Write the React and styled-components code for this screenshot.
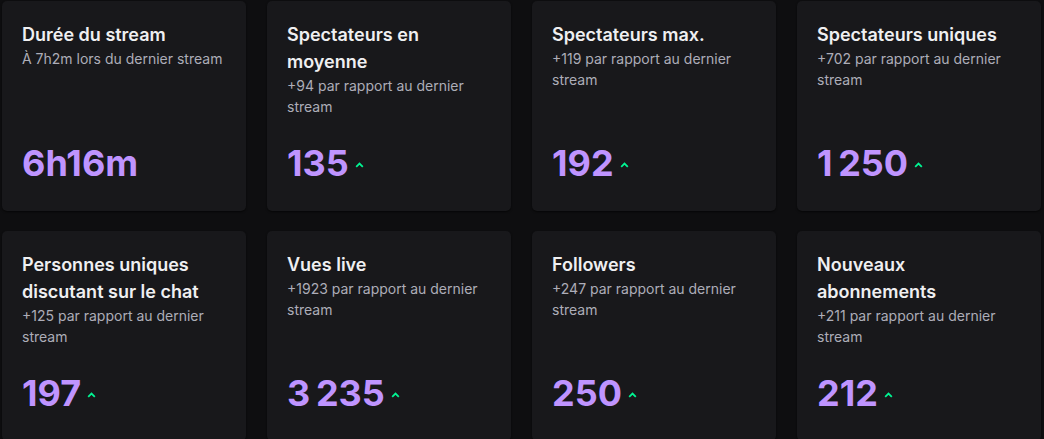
import React from 'react';
import styled, { createGlobalStyle } from 'styled-components';

const GlobalStyle = createGlobalStyle`
  html, body {
    margin: 0;
    padding: 0;
    background: #0e0e10;
  }
  body {
    font-family: Inter, "Noto Sans", "Liberation Sans", sans-serif;
    -webkit-font-smoothing: antialiased;
  }
`;

const stats = [
  { title: 'Durée du stream', desc: 'À 7h2m lors du dernier stream', value: '6h16m', up: false },
  { title: 'Spectateurs en moyenne', desc: '+94 par rapport au dernier stream', value: '135', up: true },
  { title: 'Spectateurs max.', desc: '+119 par rapport au dernier stream', value: '192', up: true },
  { title: 'Spectateurs uniques', desc: '+702 par rapport au dernier stream', value: '1\u202F250', up: true },
  { title: 'Personnes uniques discutant sur le chat', desc: '+125 par rapport au dernier stream', value: '197', up: true },
  { title: 'Vues live', desc: '+1923 par rapport au dernier stream', value: '3\u202F235', up: true },
  { title: 'Followers', desc: '+247 par rapport au dernier stream', value: '250', up: true },
  { title: 'Nouveaux abonnements', desc: '+211 par rapport au dernier stream', value: '212', up: true },
];

const Grid = styled.div`
  display: grid;
  grid-template-columns: repeat(4, 244px);
  grid-auto-rows: 210px;
  column-gap: 21px;
  row-gap: 20px;
  padding: 1px 0 0 2px;
`;

const Card = styled.div`
  background: #18181b;
  border-radius: 5px;
  box-shadow: 0 1px 2px rgba(0, 0, 0, 0.6);
  padding: 20px 20px 25px;
  display: flex;
  flex-direction: column;
  box-sizing: border-box;
`;

const Title = styled.div`
  color: #efeff1;
  font-size: 18px;
  font-weight: 600;
  line-height: 27px;
`;

const Desc = styled.div`
  color: #adadb8;
  font-size: 14px;
  line-height: 21px;
`;

const ValueRow = styled.div`
  margin-top: auto;
  display: flex;
  align-items: center;
  gap: 6px;
`;

const Value = styled.span`
  color: #bf94ff;
  font-size: 36px;
  font-weight: 700;
  line-height: 46px;
`;

const Trend = styled.svg`
  width: 9px;
  height: 6px;
  margin-top: 4px;
`;

const UpArrow = () => (
  <Trend viewBox="0 0 9 6">
    <polyline points="1.2,4.8 4.5,1.6 7.8,4.8" fill="none" stroke="#00f593" strokeWidth="1.8" />
  </Trend>
);

export default function App() {
  return (
    <>
      <GlobalStyle />
      <Grid>
        {stats.map((s, i) => (
          <Card key={i}>
            <Title>{s.title}</Title>
            <Desc>{s.desc}</Desc>
            <ValueRow>
              <Value>{s.value}</Value>
              {s.up && <UpArrow />}
            </ValueRow>
          </Card>
        ))}
      </Grid>
    </>
  );
}
